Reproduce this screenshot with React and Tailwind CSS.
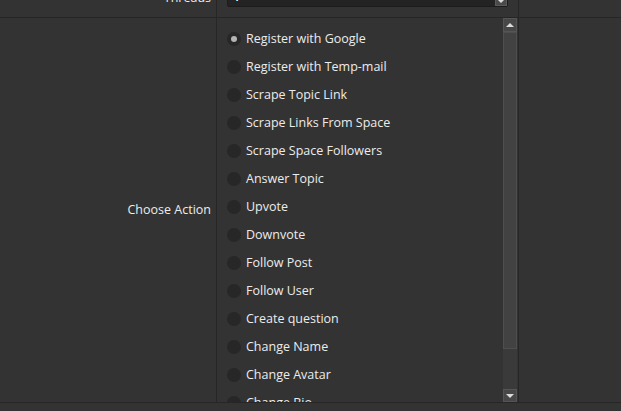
const ACTIONS = [
  "Register with Google",
  "Register with Temp-mail",
  "Scrape Topic Link",
  "Scrape Links From Space",
  "Scrape Space Followers",
  "Answer Topic",
  "Upvote",
  "Downvote",
  "Follow Post",
  "Follow User",
  "Create question",
  "Change Name",
  "Change Avatar",
  "Change Bio",
];

function Radio({ checked }) {
  return (
    <div className="w-[14px] h-[14px] rounded-full bg-[#272727] flex items-center justify-center shrink-0">
      {checked && <div className="w-[6px] h-[6px] rounded-full bg-[#b4b4b4]" />}
    </div>
  );
}

function Scrollbar() {
  return (
    <div className="w-[14px] flex flex-col mr-[1px] shrink-0">
      <div className="h-[14px] bg-[#474747] border border-[#555] flex items-center justify-center">
        <div className="w-0 h-0 border-l-[4px] border-r-[4px] border-b-[4px] border-l-transparent border-r-transparent border-b-[#dcdcdc]" />
      </div>
      <div className="flex-1 bg-[#3a3a3a] flex flex-col">
        <div className="h-[317px] bg-[#424242] border border-[#4e4e4e]" />
      </div>
      <div className="h-[13px] bg-[#474747] border border-[#555] flex items-center justify-center">
        <div className="w-0 h-0 border-l-[4px] border-r-[4px] border-t-[4px] border-l-transparent border-r-transparent border-t-[#dcdcdc]" />
      </div>
    </div>
  );
}

export default function App() {
  return (
    <div
      className="w-[621px] h-[411px] overflow-hidden bg-[#333333] text-[#ececec] text-[12.5px]"
      style={{ fontFamily: '"Open Sans", "Liberation Sans", sans-serif' }}
    >
      <div className="-mt-[17px]">
        {/* threads row */}
        <div className="flex h-[35px] border-b border-[#262626]">
          <div className="w-[217px] border-r border-[#262626] flex items-center justify-end pr-[5px] pb-[4px]">
            Threads
          </div>
          <div className="w-[302px] border-r border-[#262626] px-[10px] flex items-center pb-[8px]">
            <div className="flex-1 h-[22px] bg-[#232323] border border-[#1c1c1c] rounded-[2px] flex items-end justify-between pl-[5px]">
              <span className="text-white leading-none mb-[3px] font-semibold">1</span>
              <div className="w-[12px] h-[20px] bg-[#4a4a4a] border border-[#5a5a5a] flex items-end justify-center pb-[2px]">
                <div className="w-0 h-0 border-l-[4px] border-r-[4px] border-t-[4px] border-l-transparent border-r-transparent border-t-[#dcdcdc]" />
              </div>
            </div>
          </div>
        </div>

        {/* action row */}
        <div className="flex h-[385px] border-b border-[#262626]">
          <div className="w-[217px] border-r border-[#262626] flex items-center justify-end pr-[5px] pt-[1px]">
            Choose Action
          </div>
          <div className="w-[302px] border-r border-[#262626] flex">
            <div className="flex-1 overflow-hidden pt-[7px] pl-[10px]">
              {ACTIONS.map((a, i) => (
                <div key={a} className="h-[28px] flex items-center gap-[5px]">
                  <Radio checked={i === 0} />
                  <span>{a}</span>
                </div>
              ))}
            </div>
            <Scrollbar />
          </div>
        </div>
      </div>
    </div>
  );
}
